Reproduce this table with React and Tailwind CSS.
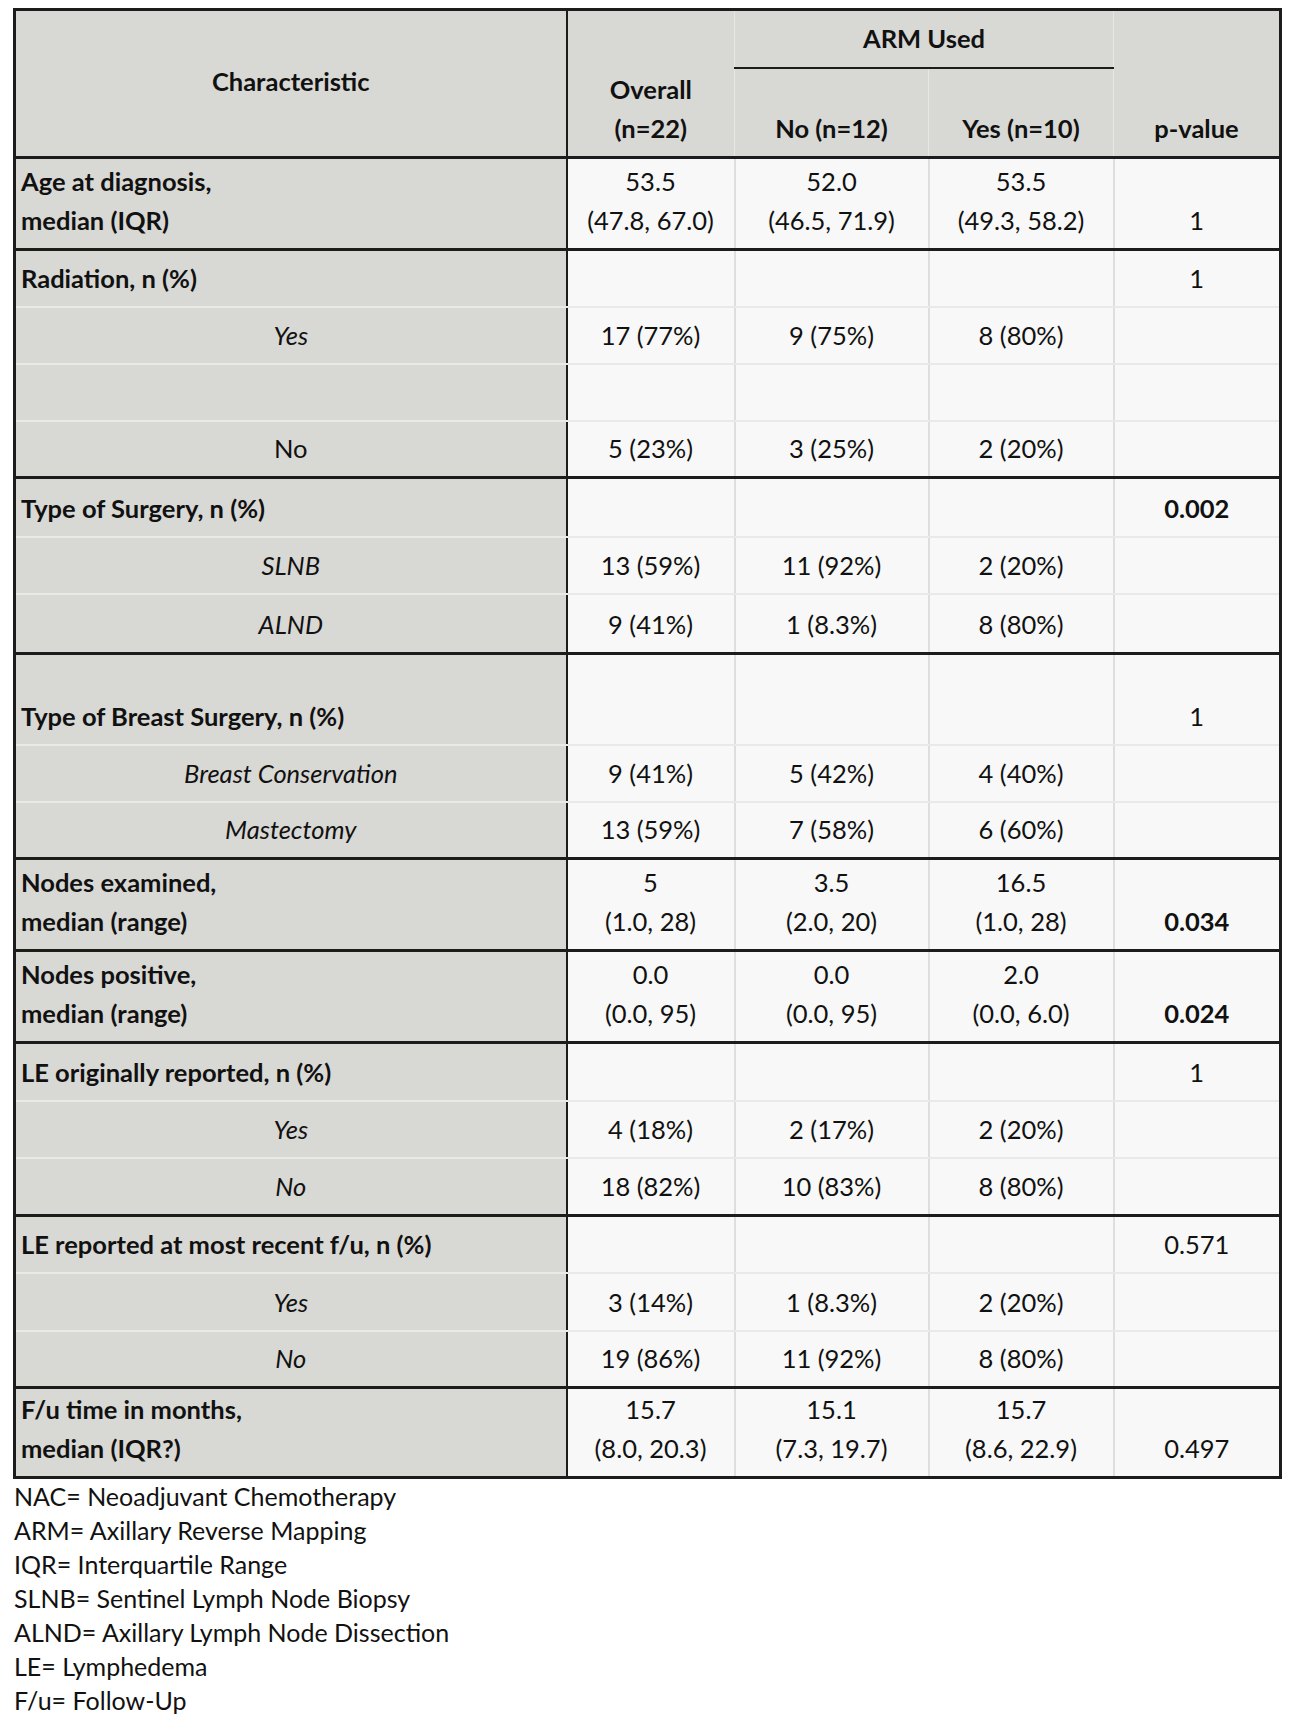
const rows = [
  { label: ['Age at diagnosis,', 'median (IQR)'], head: true, vals: [['53.5', '(47.8, 67.0)'], ['52.0', '(46.5, 71.9)'], ['53.5', '(49.3, 58.2)']], p: '1', h: 'h-[92px]', end: true },
  { label: ['Radiation, n (%)'], head: true, vals: [], p: '1', h: 'h-[57px]' },
  { label: ['Yes'], italic: true, vals: [['17 (77%)'], ['9 (75%)'], ['8 (80%)']], h: 'h-[57px]' },
  { label: [''], vals: [], h: 'h-[57px]' },
  { label: ['No'], vals: [['5 (23%)'], ['3 (25%)'], ['2 (20%)']], h: 'h-[57px]', end: true },
  { label: ['Type of Surgery, n (%)'], head: true, vals: [], p: '0.002', pBold: true, h: 'h-[59px]' },
  { label: ['SLNB'], italic: true, vals: [['13 (59%)'], ['11 (92%)'], ['2 (20%)']], h: 'h-[57px]' },
  { label: ['ALND'], italic: true, vals: [['9 (41%)'], ['1 (8.3%)'], ['8 (80%)']], h: 'h-[60px]', end: true },
  { label: ['Type of Breast Surgery, n (%)'], head: true, vals: [], p: '1', h: 'h-[91px]' },
  { label: ['Breast Conservation'], italic: true, vals: [['9 (41%)'], ['5 (42%)'], ['4 (40%)']], h: 'h-[57px]' },
  { label: ['Mastectomy'], italic: true, vals: [['13 (59%)'], ['7 (58%)'], ['6 (60%)']], h: 'h-[57px]', end: true },
  { label: ['Nodes examined,', 'median (range)'], head: true, vals: [['5', '(1.0, 28)'], ['3.5', '(2.0, 20)'], ['16.5', '(1.0, 28)']], p: '0.034', pBold: true, h: 'h-[92px]', end: true },
  { label: ['Nodes positive,', 'median (range)'], head: true, vals: [['0.0', '(0.0, 95)'], ['0.0', '(0.0, 95)'], ['2.0', '(0.0, 6.0)']], p: '0.024', pBold: true, h: 'h-[92px]', end: true },
  { label: ['LE originally reported, n (%)'], head: true, vals: [], p: '1', h: 'h-[58px]' },
  { label: ['Yes'], italic: true, vals: [['4 (18%)'], ['2 (17%)'], ['2 (20%)']], h: 'h-[57px]' },
  { label: ['No'], italic: true, vals: [['18 (82%)'], ['10 (83%)'], ['8 (80%)']], h: 'h-[58px]', end: true },
  { label: ['LE reported at most recent f/u, n (%)'], head: true, vals: [], p: '0.571', h: 'h-[57px]' },
  { label: ['Yes'], italic: true, vals: [['3 (14%)'], ['1 (8.3%)'], ['2 (20%)']], h: 'h-[58px]' },
  { label: ['No'], italic: true, vals: [['19 (86%)'], ['11 (92%)'], ['8 (80%)']], h: 'h-[57px]', end: true },
  { label: ['F/u time in months,', 'median (IQR?)'], head: true, vals: [['15.7', '(8.0, 20.3)'], ['15.1', '(7.3, 19.7)'], ['15.7', '(8.6, 22.9)']], p: '0.497', h: 'h-[90px]', end: true },
];

const notes = [
  'NAC= Neoadjuvant Chemotherapy',
  'ARM= Axillary Reverse Mapping',
  'IQR= Interquartile Range',
  'SLNB= Sentinel Lymph Node Biopsy',
  'ALND= Axillary Lymph Node Dissection',
  'LE= Lymphedema',
  'F/u= Follow-Up',
];

function Lines({ lines }) {
  return lines.map((l, i) => <div key={i}>{l || '\u00a0'}</div>);
}

export default function App() {
  return (
    <div className="min-h-screen bg-white pt-[8px] pl-[13px] text-[#111] font-['Lato','Open_Sans',sans-serif] text-[25.5px] leading-[39px]">
      <table className="w-[1266px] table-fixed border-collapse border-[3px] border-[#1c1c1c]">
        <colgroup>
          <col className="w-[552px]" />
          <col className="w-[168px]" />
          <col className="w-[194px]" />
          <col className="w-[185px]" />
          <col className="w-[167px]" />
        </colgroup>
        <thead>
          <tr className="h-[58px] bg-[#d8d8d4] font-bold">
            <th rowSpan={2} className="align-middle text-center border-r-2 border-r-[#1c1c1c] border-b-[3px] border-b-[#1c1c1c] pb-[4px]">
              Characteristic
            </th>
            <th rowSpan={2} className="align-bottom text-center pb-[8px] border-r border-r-[#e6e6e3] border-b-[3px] border-b-[#1c1c1c]">
              <div>Overall</div>
              <div>(n=22)</div>
            </th>
            <th colSpan={2} className="align-middle text-center border-b-2 border-b-[#1c1c1c] border-r border-r-[#e6e6e3]">
              ARM Used
            </th>
            <th rowSpan={2} className="align-bottom text-center pb-[8px] border-b-[3px] border-b-[#1c1c1c]">
              p-value
            </th>
          </tr>
          <tr className="h-[90px] bg-[#d8d8d4] font-bold">
            <th className="align-bottom text-center pb-[8px] border-r border-r-[#e6e6e3] border-b-[3px] border-b-[#1c1c1c]">No (n=12)</th>
            <th className="align-bottom text-center pb-[8px] border-r border-r-[#e6e6e3] border-b-[3px] border-b-[#1c1c1c]">Yes (n=10)</th>
          </tr>
        </thead>
        <tbody>
          {rows.map((r, i) => {
            const bottom = r.end
              ? 'border-b-[3px] border-b-[#1c1c1c]'
              : 'border-b-2 border-b-[#e9e9e7]';
            return (
              <tr key={i} className={r.h}>
                <td
                  className={`bg-[#d8d8d4] align-bottom pb-[8px] border-r-2 border-r-[#1c1c1c] ${bottom} ${
                    r.head ? 'font-bold text-left pl-[5px]' : 'text-center'
                  } ${r.italic ? 'italic' : ''}`}
                >
                  <Lines lines={r.label} />
                </td>
                {[0, 1, 2].map((c) => (
                  <td key={c} className={`bg-[#f7f8f7] align-bottom text-center pb-[8px] border-r-2 border-r-[#dedede] ${bottom}`}>
                    {r.vals[c] ? <Lines lines={r.vals[c]} /> : null}
                  </td>
                ))}
                <td className={`bg-[#f7f8f7] align-bottom text-center pb-[8px] ${bottom} ${r.pBold ? 'font-bold' : ''}`}>
                  {r.p || ''}
                </td>
              </tr>
            );
          })}
        </tbody>
      </table>
      <div className="pl-[1px] text-[25px] leading-[34px]">
        {notes.map((n) => (
          <div key={n}>{n}</div>
        ))}
      </div>
    </div>
  );
}
